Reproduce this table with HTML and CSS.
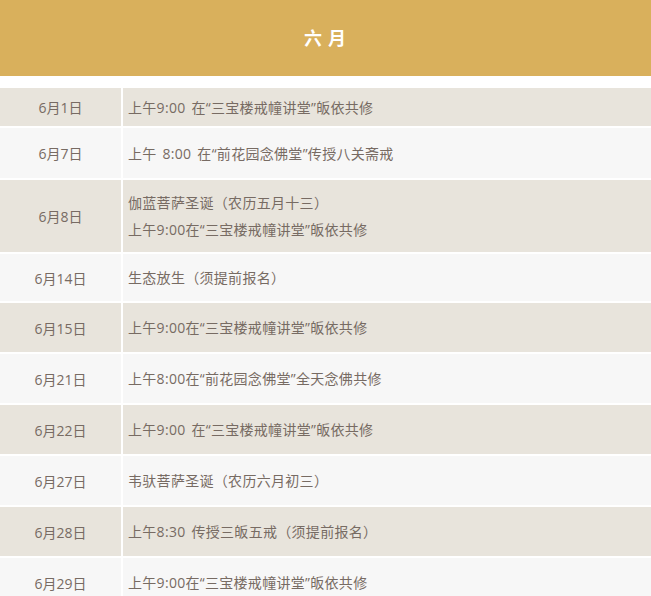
FILE: index.html
```html
<!DOCTYPE html>
<html lang="zh">
<head>
<meta charset="utf-8">
<link rel="stylesheet" href="styles.css">
</head>
<body>
<header class="head"><h1 class="title">六 月</h1></header>
<div class="table">
  <div class="row odd r38"><div class="date">6月1日</div><div class="desc">上午9:00 在“三宝楼戒幢讲堂”皈依共修</div></div>
  <div class="row even r50"><div class="date">6月7日</div><div class="desc">上午 8:00 在“前花园念佛堂”传授八关斋戒</div></div>
  <div class="row odd r72"><div class="date">6月8日</div><div class="desc">伽蓝菩萨圣诞（农历五月十三）<br>上午9:00在“三宝楼戒幢讲堂”皈依共修</div></div>
  <div class="row even r47"><div class="date">6月14日</div><div class="desc">生态放生（须提前报名）</div></div>
  <div class="row odd"><div class="date">6月15日</div><div class="desc">上午9:00在“三宝楼戒幢讲堂”皈依共修</div></div>
  <div class="row even"><div class="date">6月21日</div><div class="desc">上午8:00在“前花园念佛堂”全天念佛共修</div></div>
  <div class="row odd"><div class="date">6月22日</div><div class="desc">上午9:00 在“三宝楼戒幢讲堂”皈依共修</div></div>
  <div class="row even"><div class="date">6月27日</div><div class="desc">韦驮菩萨圣诞（农历六月初三）</div></div>
  <div class="row odd"><div class="date">6月28日</div><div class="desc">上午8:30 传授三皈五戒（须提前报名）</div></div>
  <div class="row even"><div class="date">6月29日</div><div class="desc">上午9:00在“三宝楼戒幢讲堂”皈依共修</div></div>
</div>
</body>
</html>
```
FILE: styles.css
```css
html, body {
  margin: 0;
  padding: 0;
  background: #ffffff;
}
body {
  font-family: "Open Sans", "Noto Sans CJK SC", sans-serif;
  font-size: 14px;
  color: #776b63;
}
.head {
  height: 76px;
  box-sizing: border-box;
  padding-bottom: 3px;
  background: #d9b05c;
  display: flex;
  align-items: center;
  justify-content: center;
}
.title {
  margin: 0;
  color: #ffffff;
  font-family: "Noto Sans CJK SC", sans-serif;
  font-size: 18px;
  font-weight: bold;
  letter-spacing: 1px;
  white-space: pre;
}
.table {
  margin-top: 12px;
  display: flex;
  flex-direction: column;
  gap: 2px;
}
.row {
  display: grid;
  grid-template-columns: 121px 1fr;
  column-gap: 2px;
  height: 49px;
}
.r38 { height: 38px; }
.r50 { height: 50px; }
.r72 { height: 72px; }
.r47 { height: 47px; }
.row > div {
  display: flex;
  align-items: center;
}
.odd > div { background: #e8e4dc; }
.even > div { background: #f7f7f7; }
.date {
  justify-content: center;
}
.desc {
  padding-left: 5px;
  line-height: 27px;
  letter-spacing: 0.3px;
  word-spacing: 2px;
}
.r72 .desc {
  display: block;
  padding-top: 9px;
}
```
